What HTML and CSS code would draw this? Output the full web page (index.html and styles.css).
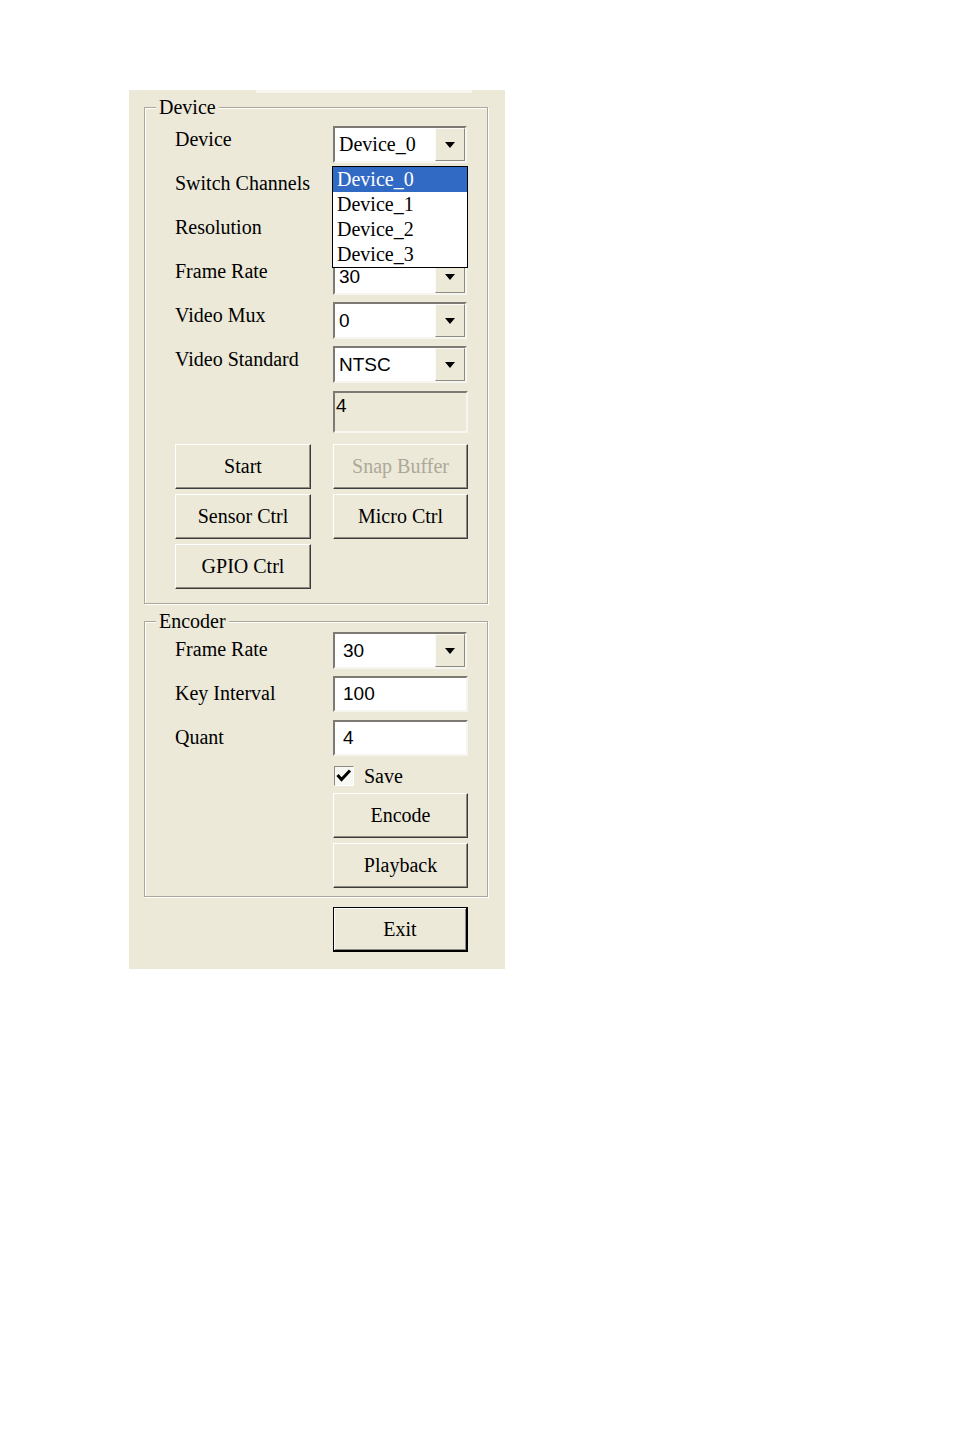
FILE: index.html
```html
<!DOCTYPE html>
<html>
<head>
<meta charset="utf-8">
<link rel="stylesheet" href="styles.css">
</head>
<body>
<div class="panel">
  <div class="strip"></div>
  <div class="group g1">
    <span class="legend">Device</span>
    <div class="row">
      <span class="lbl">Device</span>
      <div class="combo">
        <span class="val serif">Device_0</span>
        <span class="dbtn"><span class="tri"></span></span>
        <div class="list">
          <div class="item sel">Device_0</div>
          <div class="item">Device_1</div>
          <div class="item">Device_2</div>
          <div class="item">Device_3</div>
        </div>
      </div>
    </div>
    <div class="row">
      <span class="lbl">Switch Channels</span>
      <div class="combo"><span class="val"></span><span class="dbtn"><span class="tri"></span></span></div>
    </div>
    <div class="row">
      <span class="lbl">Resolution</span>
      <div class="combo"><span class="val"></span><span class="dbtn"><span class="tri"></span></span></div>
    </div>
    <div class="row">
      <span class="lbl">Frame Rate</span>
      <div class="combo"><span class="val">30</span><span class="dbtn"><span class="tri"></span></span></div>
    </div>
    <div class="row">
      <span class="lbl">Video Mux</span>
      <div class="combo"><span class="val">0</span><span class="dbtn"><span class="tri"></span></span></div>
    </div>
    <div class="row">
      <span class="lbl">Video Standard</span>
      <div class="combo"><span class="val">NTSC</span><span class="dbtn"><span class="tri"></span></span></div>
    </div>
    <div class="tb dis">4</div>
    <div class="btnrow first">
      <div class="b3d wide">Start</div>
      <div class="b3d disabled">Snap Buffer</div>
    </div>
    <div class="btnrow">
      <div class="b3d wide">Sensor Ctrl</div>
      <div class="b3d">Micro Ctrl</div>
    </div>
    <div class="btnrow">
      <div class="b3d wide">GPIO Ctrl</div>
    </div>
  </div>

  <div class="group g2">
    <span class="legend">Encoder</span>
    <div class="row">
      <span class="lbl">Frame Rate</span>
      <div class="combo c2"><span class="val">30</span><span class="dbtn"><span class="tri"></span></span></div>
    </div>
    <div class="row">
      <span class="lbl">Key Interval</span>
      <div class="tb">100</div>
    </div>
    <div class="row">
      <span class="lbl">Quant</span>
      <div class="tb">4</div>
    </div>
    <div class="chkrow">
      <span class="chk">
        <svg width="18" height="18" viewBox="0 0 18 18"><polyline points="2.5,8 6.5,12.5 15,3.5" fill="none" stroke="#000" stroke-width="3"/></svg>
      </span>
      <span class="chklbl">Save</span>
    </div>
    <div class="b3d single first2">Encode</div>
    <div class="b3d single">Playback</div>
  </div>

  <div class="b3d exit">Exit</div>
</div>
</body>
</html>
```

FILE: styles.css
```css
body {
  margin: 0;
  background: #ffffff;
}

.panel {
  margin: 90px 0 0 129px;
  width: 376px;
  height: 879px;
  box-sizing: border-box;
  padding: 0 17px 0 15px;
  background: #ECE9D8;
  font-family: "Liberation Serif", "Times New Roman", serif;
  font-size: 20px;
  color: #000;
}

.strip {
  height: 3px;
  width: 216px;
  margin-left: 112px;
  background: #f6f5ef;
}

.group {
  position: relative;
  border: 1px solid #ACA899;
  box-shadow: inset 1px 1px 0 #ffffff, 1px 1px 0 #ffffff;
}

.g1 {
  margin-top: 14px;
  padding: 18px 0 14px 30px;
}

.g2 {
  margin-top: 17px;
  padding: 10px 0 8px 30px;
}

.legend {
  position: absolute;
  top: -12px;
  left: 11px;
  padding: 0 3px;
  line-height: 22px;
  background: #ECE9D8;
}

.row {
  display: grid;
  grid-template-columns: 158px 134px;
  height: 44px;
}

.lbl {
  line-height: 20px;
  white-space: nowrap;
}

.g1 .lbl {
  padding-top: 3px;
}

.g2 .lbl {
  padding-top: 7px;
}

.combo {
  position: relative;
  height: 37px;
  box-sizing: border-box;
  border: 2px solid;
  border-color: #7c7a72 #f6f5f0 #f6f5f0 #7c7a72;
  background: #ffffff;
  display: flex;
  align-items: stretch;
}

.combo .val {
  flex: 1;
  display: flex;
  align-items: center;
  padding-left: 4px;
  font-family: "Liberation Sans", Arial, sans-serif;
  font-size: 19px;
}

.combo .val.serif {
  font-family: "Liberation Serif", "Times New Roman", serif;
  font-size: 20px;
}

.combo.c2 .val {
  padding-left: 8px;
}

.dbtn {
  width: 30px;
  box-sizing: border-box;
  background: #ECE9D8;
  border: 1px solid;
  border-color: #fbfaf6 #8d8b80 #8d8b80 #fbfaf6;
  display: flex;
  align-items: center;
  justify-content: center;
}

.tri {
  width: 0;
  height: 0;
  border-left: 5px solid transparent;
  border-right: 5px solid transparent;
  border-top: 6px solid #000;
  margin-top: 1px;
}

.list {
  position: absolute;
  top: 38px;
  left: -3px;
  width: 136px;
  box-sizing: border-box;
  border: 1px solid #000;
  background: #ffffff;
  z-index: 5;
}

.item {
  height: 25px;
  line-height: 25px;
  padding-left: 4px;
  font-family: "Liberation Serif", "Times New Roman", serif;
  font-size: 20px;
}

.item.sel {
  background: #316AC5;
  color: #ffffff;
}

.tb {
  width: 135px;
  height: 36px;
  box-sizing: border-box;
  border: 2px solid;
  border-color: #7c7a72 #f6f5f0 #f6f5f0 #7c7a72;
  background: #ffffff;
  display: flex;
  align-items: center;
  padding-left: 8px;
  font-family: "Liberation Sans", Arial, sans-serif;
  font-size: 19px;
}

.g1 .tb.dis {
  margin: 1px 0 0 158px;
  height: 42px;
  background: #ECE9D8;
  align-items: flex-start;
  padding: 2px 0 0 1px;
  line-height: 22px;
}

.btnrow {
  display: flex;
  gap: 22px;
  margin-top: 5px;
}

.btnrow.first {
  margin-top: 11px;
}

.b3d {
  width: 135px;
  height: 45px;
  box-sizing: border-box;
  background: #ECE9D8;
  border: 1px solid;
  border-color: #ffffff #3c3c3c #3c3c3c #ffffff;
  box-shadow: inset -1px -1px 0 #8f8d82;
  display: flex;
  align-items: center;
  justify-content: center;
  white-space: nowrap;
}

.b3d.wide {
  width: 136px;
}

.b3d.disabled {
  color: #aca899;
}

.b3d.single {
  margin: 5px 0 0 158px;
}

.b3d.single.first2 {
  margin-top: 5px;
}

.chkrow {
  height: 24px;
  display: flex;
  align-items: center;
  margin-left: 159px;
}

.chk {
  width: 20px;
  height: 20px;
  box-sizing: border-box;
  border: 1px solid;
  border-color: #8d8b80 #ffffff #ffffff #8d8b80;
  background: #f7f7f4;
  display: flex;
  align-items: center;
  justify-content: center;
}

.chk svg {
  display: block;
}

.chklbl {
  margin-left: 10px;
  line-height: 20px;
}

.b3d.exit {
  margin: 10px 0 0 189px;
  border: 1px solid #000;
  border-right-width: 2px;
  border-bottom-width: 2px;
  box-shadow: inset 1px 1px 0 #ffffff, inset -1px -1px 0 #8f8d82;
}
```
